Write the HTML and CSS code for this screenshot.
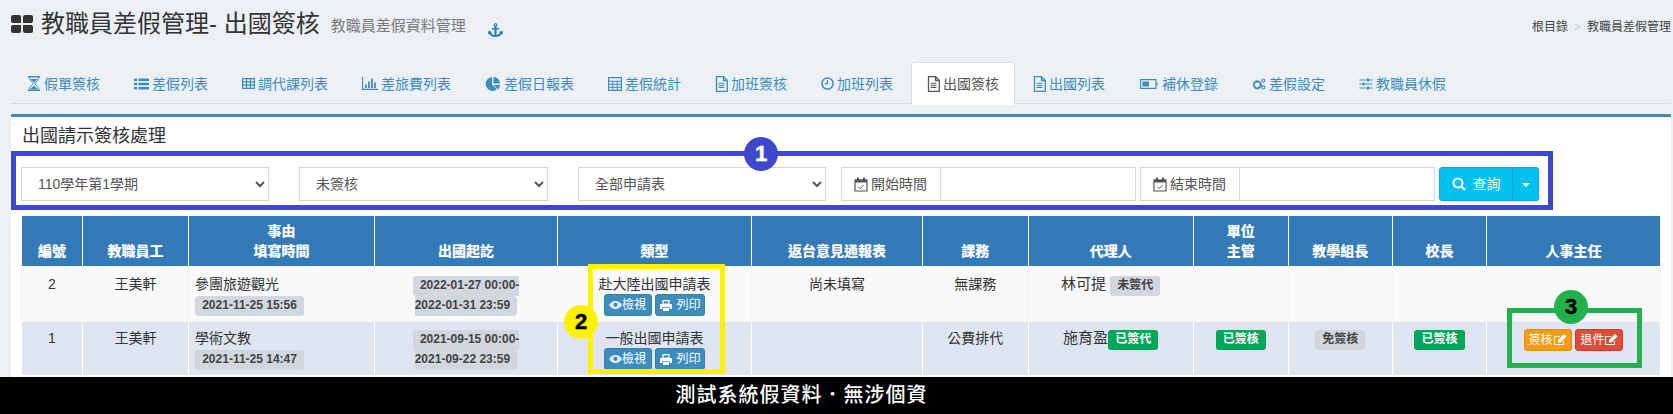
FILE: index.html
```html
<!DOCTYPE html>
<html lang="zh-Hant">
<head>
  <meta charset="UTF-8">
  <title>教職員差假管理- 出國簽核</title>
  <link rel="stylesheet" href="styles.css">
</head>
<body>
  <svg class="defs" width="0" height="0">
    <symbol id="i-file" viewBox="0 0 13 16">
      <path d="M1.500.7h7l3.800 3.800v10.800H1.500z M8.500.7v3.800h3.800" fill="none" stroke="currentColor" stroke-width="1.300"/>
      <path d="M3.600 7.200h5.800M3.600 9.300h5.800M3.600 11.400h5.800" fill="none" stroke="currentColor" stroke-width="1.100"/>
    </symbol>
    <symbol id="i-cal" viewBox="0 0 14 15">
      <path d="M1 3h12v11H1z" fill="none" stroke="currentColor" stroke-width="1.200"/>
      <path d="M1 2.500h12v3H1zM3 .5h2v3H3zM9 .5h2v3H9z" fill="currentColor"/>
      <path d="M4.200 9.600l2 2 3.600-3.600" fill="none" stroke="currentColor"/>
    </symbol>
    <symbol id="i-eye" viewBox="0 0 13 8">
      <path d="M6.500 0C3.500 0 1.200 2.200 0 4c1.200 1.800 3.500 4 6.500 4s5.300-2.200 6.500-4C11.800 2.200 9.500 0 6.500 0z" fill="#e4edf3"/>
      <circle cx="6.500" cy="3.800" r="2.100" fill="#3c8dbc"/>
    </symbol>
    <symbol id="i-print" viewBox="0 0 12 11">
      <path d="M3 .6h6v3.400H3z" fill="none" stroke="currentColor" stroke-width="1.200"/>
      <path d="M0 4h12v5H9.800V7H2.200v2H0zM3 7.800h6V11H3z" fill="currentColor"/>
    </symbol>
    <symbol id="i-edit" viewBox="0 0 14 12">
      <path d="M10.500 7v3.500h-9v-8H7" fill="none" stroke="currentColor" stroke-width="1.200" opacity=".85"/>
      <path d="M5 6l6-6 2.500 2.500-6 6H5z" fill="currentColor"/>
    </symbol>
  </svg>

  <header class="page-head">
    <div class="title-wrap">
      <svg class="title-icon" width="22" height="18" viewBox="0 0 22 18"><path d="M2 0h6a2 2 0 0 1 2 2v6H2a2 2 0 0 1-2-2V2a2 2 0 0 1 2-2zM14 0h6a2 2 0 0 1 2 2v4a2 2 0 0 1-2 2h-8V2a2 2 0 0 1 2-2zM2 10h8v6a2 2 0 0 1-2 2H2a2 2 0 0 1-2-2v-4a2 2 0 0 1 2-2zM12 10h8a2 2 0 0 1 2 2v4a2 2 0 0 1-2 2h-6a2 2 0 0 1-2-2z" fill="#333"/></svg>
      <h1>教職員差假管理- 出國簽核</h1>
      <small>教職員差假資料管理</small>
      <svg class="anchor" width="15" height="14" viewBox="0 0 15 14"><path d="M7.500 0a2 2 0 0 1 1 3.700V5H11v1.500H8.500v5.600c1.600-.2 2.900-1 3.500-2L10.800 9 14.500 7.800 15 11.500l-1.100-.8C12.800 12.700 10.300 14 7.500 14s-5.300-1.300-6.400-3.300l-1.100.8.500-3.700L4.200 9 3 10.100c.6 1 1.900 1.800 3.500 2V6.500H4V5h2.500V3.700a2 2 0 0 1 1-3.700zm0 1.200a.8.8 0 1 0 0 1.600.8.800 0 0 0 0-1.600z" fill="#1f7ac4"/></svg>
    </div>
    <div class="crumbs"><span>根目錄</span><i>&gt;</i><span>教職員差假管理</span></div>
  </header>

  <ul class="nav-tabs">
    <li><a href="#"><svg width="14" height="15" viewBox="0 0 14 15"><path d="M1 .7h12M1 14.300h12" stroke="currentColor" stroke-width="1.400"/><path d="M2.500 1.500C2.500 5 6 6 6 7.500S2.500 10 2.500 13.500M11.500 1.500C11.500 5 8 6 8 7.500s3.500 2.500 3.500 6" fill="none" stroke="currentColor"/><path d="M3.500 3h7L7 6.800zM3 13.500L7 9.500l4 4z" fill="currentColor"/></svg>假單簽核</a></li>
    <li><a href="#"><svg width="15" height="12" viewBox="0 0 15 12"><path d="M0 .5h3v2.500H0zM4.500.5H15V3H4.500zM0 4.800h3v2.500H0zM4.500 4.800H15v2.500H4.500zM0 9h3v2.500H0zM4.500 9H15v2.500H4.500z" fill="currentColor"/></svg>差假列表</a></li>
    <li><a href="#"><svg width="13" height="11" viewBox="0 0 13 11"><path d="M.6.6h11.800v9.800H.6zM.6 3.900h11.800M.6 7.200h11.800M4.500.6v9.800M8.500.6v9.800" fill="none" stroke="currentColor" stroke-width="1.200"/></svg>調代課列表</a></li>
    <li><a href="#"><svg width="16" height="13" viewBox="0 0 16 13"><path d="M.6 0v12.400H16" fill="none" stroke="currentColor" stroke-width="1.200"/><path d="M3 7.500h1.800V11H3zM6 4.500h1.800V11H6zM9 1.500h1.800V11H9zM12 5.500h1.800V11H12z" fill="currentColor"/></svg>差旅費列表</a></li>
    <li><a href="#"><svg width="16" height="14" viewBox="0 0 15 14"><path d="M6.500 0v7.500l5 5A7 7 0 1 1 6.500 0zM8 0a6.500 6.500 0 0 1 6.500 6.500H8zM8 8h6.500a6.500 6.500 0 0 1-1.900 4.600z" fill="currentColor"/></svg>差假日報表</a></li>
    <li><a href="#"><svg width="14" height="14" viewBox="0 0 14 14"><path d="M.6.6h12.800v12.800H.6z" fill="none" stroke="currentColor" stroke-width="1.200"/><path d="M.6 4.300h12.800M.6 7.300h12.800M.6 10.300h12.800M4.800 4.300v9M9.200 4.300v9" fill="none" stroke="currentColor"/></svg>差假統計</a></li>
    <li><a href="#"><svg width="13" height="16"><use href="#i-file"/></svg>加班簽核</a></li>
    <li><a href="#"><svg width="13" height="13" viewBox="0 0 13 13"><circle cx="6.500" cy="6.500" r="5.600" fill="none" stroke="currentColor" stroke-width="1.500"/><path d="M6.500 3v3.700H3.800" fill="none" stroke="currentColor" stroke-width="1.200"/></svg>加班列表</a></li>
    <li class="active"><a href="#"><svg width="13" height="16"><use href="#i-file"/></svg>出國簽核</a></li>
    <li><a href="#"><svg width="13" height="16"><use href="#i-file"/></svg>出國列表</a></li>
    <li><a href="#"><svg width="20" height="10" viewBox="0 0 18 10"><path d="M.6.600h15.300v8.800H.6z" fill="none" stroke="currentColor" stroke-width="1.100"/><path d="M2.500 2.500h6.500v5H2.500z" fill="currentColor"/><path d="M16.500 3.500h1.200v3h-1.200z" fill="currentColor"/></svg>補休登錄</a></li>
    <li><a href="#"><svg width="14" height="12" viewBox="0 0 16 14"><circle cx="6" cy="8" r="3.800" fill="none" stroke="currentColor" stroke-width="2.400" stroke-dasharray="2 .6"/><circle cx="6" cy="8" r="4.400" fill="none" stroke="currentColor" stroke-width="1.500"/><circle cx="13" cy="3" r="1.800" fill="none" stroke="currentColor" stroke-width="1.300"/><circle cx="13" cy="11" r="1.800" fill="none" stroke="currentColor" stroke-width="1.300"/></svg>差假設定</a></li>
    <li><a href="#"><svg width="14" height="12" viewBox="0 0 13 12"><path d="M0 2h13M0 6h13M0 10h13" stroke="currentColor" stroke-width="1.100"/><path d="M7.500.5h2v3h-2zM3 4.500h2v3H3zM7.500 8.500h2v3h-2z" fill="currentColor"/></svg>教職員休假</a></li>
  </ul>

  <section class="panel">
    <h2>出國請示簽核處理</h2>
    <div class="filter">
      <select class="sel"><option>110學年第1學期</option></select>
      <select class="sel wide"><option>未簽核</option></select>
      <select class="sel"><option>全部申請表</option></select>
      <div class="date-group first">
        <span class="addon"><svg width="14" height="15"><use href="#i-cal"/></svg>開始時間</span>
        <span class="date-input"></span>
      </div>
      <div class="date-group">
        <span class="addon"><svg width="14" height="15"><use href="#i-cal"/></svg>結束時間</span>
        <span class="date-input"></span>
      </div>
      <div class="search">
        <button class="search-main" type="button"><svg width="14" height="14" viewBox="0 0 14 14"><circle cx="6" cy="6" r="4.500" fill="none" stroke="currentColor" stroke-width="2"/><path d="M9.300 9.300l3.700 3.700" stroke="currentColor" stroke-width="2.400"/></svg>查詢</button>
        <button class="search-caret" type="button"><b></b></button>
      </div>
    </div>

    <table class="list">
      <colgroup>
        <col class="c1"><col class="c2"><col class="c3"><col class="c4"><col class="c5"><col class="c6">
        <col class="c7"><col class="c8"><col class="c9"><col class="c10"><col class="c11"><col class="c12">
      </colgroup>
      <thead>
        <tr>
          <th>編號</th><th>教職員工</th><th>事由<br>填寫時間</th><th>出國起訖</th><th>類型</th><th>返台意見通報表</th>
          <th>課務</th><th>代理人</th><th>單位<br>主管</th><th>教學組長</th><th>校長</th><th>人事主任</th>
        </tr>
      </thead>
      <tbody>
        <tr class="odd">
          <td>2</td>
          <td>王美軒</td>
          <td class="left">參團旅遊觀光<br><span class="label">2021-11-25 15:56</span></td>
          <td><span class="label">2022-01-27 00:00-<br>2022-01-31 23:59</span></td>
          <td>赴大陸出國申請表<br><a class="btn view" href="#"><svg width="13" height="8"><use href="#i-eye"/></svg>檢視</a> <a class="btn print" href="#"><svg width="12" height="11"><use href="#i-print"/></svg>列印</a></td>
          <td>尚未填寫</td>
          <td>無課務</td>
          <td><span class="agent">林可提</span> <span class="label">未簽代</span></td>
          <td></td><td></td><td></td><td></td>
        </tr>
        <tr class="even">
          <td>1</td>
          <td>王美軒</td>
          <td class="left">學術文教<br><span class="label">2021-11-25 14:47</span></td>
          <td><span class="label">2021-09-15 00:00-<br>2021-09-22 23:59</span></td>
          <td>一般出國申請表<br><a class="btn view" href="#"><svg width="13" height="8"><use href="#i-eye"/></svg>檢視</a> <a class="btn print" href="#"><svg width="12" height="11"><use href="#i-print"/></svg>列印</a></td>
          <td></td>
          <td>公費排代</td>
          <td><span class="agent">施育盈</span><span class="label ok">已簽代</span></td>
          <td><span class="label ok">已簽核</span></td>
          <td><span class="label">免簽核</span></td>
          <td><span class="label ok">已簽核</span></td>
          <td><a class="btn sign" href="#">簽核<svg width="14" height="12"><use href="#i-edit"/></svg></a> <a class="btn back" href="#">退件<svg width="14" height="12"><use href="#i-edit"/></svg></a></td>
        </tr>
      </tbody>
    </table>
  </section>

  <footer class="notice">測試系統假資料．無涉個資</footer>

  <!-- annotations drawn over the screenshot -->
  <div class="mark mark-blue">1</div>
  <div class="box box-yellow"></div>
  <div class="mark mark-yellow">2</div>
  <div class="box box-green"></div>
  <div class="mark mark-green">3</div>
</body>
</html>
```

FILE: styles.css
```css
/* Global */
html, body {
  height: 414px;
}

body {
  margin: 0;
  position: relative;
  overflow: hidden;
  display: flex;
  flex-direction: column;
  background-color: #ecf0f5;
  color: #333;
  font-family: "Liberation Sans", "Noto Sans CJK TC", sans-serif;
  font-size: 14px;
  line-height: 20px;
}

a {
  text-decoration: none;
}

svg {
  flex: none;
}

.defs {
  position: absolute;
}

/* Page header */
.page-head {
  height: 62px;
  flex: none;
  display: flex;
  justify-content: space-between;
  padding: 0 2px 0 11px;
}

.title-wrap {
  display: flex;
  align-items: flex-start;
  padding-top: 9px;
}

.title-icon {
  margin: 6px 8px 0 0;
}

h1 {
  margin: 0;
  font-size: 24px;
  font-weight: 400;
  line-height: 30px;
}

small {
  margin: 7px 0 0 11px;
  font-size: 15px;
  color: #777;
}

.anchor {
  margin: 14px 0 0 22px;
}

.crumbs {
  display: flex;
  padding-top: 17px;
  font-size: 12px;
  color: #444;
}

.crumbs i {
  margin: 0 6px;
  font-style: normal;
  color: #ccc;
}

/* Tabs */
.nav-tabs {
  flex: none;
  display: flex;
  height: 41px;
  margin: 0 2px 10px 11px;
  padding: 0;
  list-style: none;
  border-bottom: 1px solid #ddd;
}

.nav-tabs li {
  margin-right: 2px;
}

.nav-tabs a {
  display: flex;
  align-items: center;
  gap: 3px;
  height: 41px;
  padding: 0 15px;
  border: 1px solid transparent;
  border-radius: 4px 4px 0 0;
  color: #3c8dbc;
}

.nav-tabs .active a {
  background-color: #fff;
  border-color: #ddd #ddd #fff;
  color: #555;
}

/* Panel */
.panel {
  flex: 1;
  margin: 0 2px 0 11px;
  border-top: 3px solid #3c8dbc;
  background-color: #fff;
}

h2 {
  margin: 0;
  padding: 9px 11px 0;
  height: 34px;
  box-sizing: border-box;
  font-size: 18px;
  font-weight: 400;
  line-height: 20px;
}

/* Filter bar */
.filter {
  display: flex;
  box-sizing: border-box;
  width: 1542px;
  height: 59px;
  padding: 11px 0 0 5px;
  border: 5px solid #3f48cc;
}

.sel {
  width: 248px;
  height: 34px;
  margin-right: 30px;
  padding-left: 12px;
  border: 1px solid #d2d6de;
  border-radius: 0;
  background-color: #fff;
  color: #555;
  font: inherit;
}

.sel.wide {
  width: 249px;
}

.sel:nth-child(3) {
  margin-right: 15px;
}

.date-group {
  display: flex;
  width: 295px;
  height: 34px;
  margin-right: 4px;
}

.addon {
  display: flex;
  align-items: center;
  gap: 3px;
  box-sizing: border-box;
  width: 100px;
  padding-left: 12px;
  border: 1px solid #d2d6de;
  color: #555;
}

.date-input {
  flex: 1;
  border: 1px solid #d2d6de;
  border-left: 0;
}

.search {
  display: flex;
  height: 34px;
}

.search button {
  border: 1px solid #00acd6;
  background-color: #00c0ef;
  color: #fff;
  font: inherit;
  padding: 0;
}

.search-main {
  display: flex;
  align-items: center;
  justify-content: center;
  gap: 7px;
  width: 74px;
  border-radius: 3px 0 0 3px;
}

.search-caret {
  width: 26px;
  border-left: 0 !important;
  border-radius: 0 3px 3px 0;
}

.search-caret b {
  display: inline-block;
  border-top: 4px solid #fff;
  border-left: 4px solid transparent;
  border-right: 4px solid transparent;
  vertical-align: middle;
}

/* Table */
.list {
  width: 1639px;
  margin: 6px 0 0 10px;
  border-collapse: collapse;
  table-layout: fixed;
}

.c1 { width: 61px; }
.c2 { width: 106px; }
.c3 { width: 186px; }
.c4 { width: 183px; }
.c5 { width: 194px; }
.c6 { width: 171px; }
.c7 { width: 105.5px; }
.c8 { width: 165.5px; }
.c9 { width: 94.5px; }
.c10 { width: 104.5px; }
.c11 { width: 94px; }
.c12 { width: 174px; }

.list th {
  padding: 5px 0;
  border: 1px solid #fff;
  border-top: 0;
  background-color: #337ab7;
  color: #fff;
  font-weight: 700;
  text-align: center;
  text-shadow: 0 0 1px rgba(255, 255, 255, .6);
  vertical-align: bottom;
}

.list td {
  padding: 5px 6px;
  text-align: center;
  vertical-align: top;
  white-space: nowrap;
}

.list td.left {
  text-align: left;
}

.odd td {
  padding-top: 7px;
  padding-bottom: 5px;
  border: 1px solid #f4f4f4;
  background-color: #f9f9f9;
}

.even td {
  padding-top: 6px;
  border: 1px solid #fff;
  border-top-color: #f4f4f4;
  background-color: #dee4f0;
}

.agent {
  font-size: 15px;
}

.label {
  padding: .2em .6em .3em;
  border-radius: .25em;
  background-color: #d2d6de;
  color: #444;
  font-size: 12px;
  font-weight: 700;
  line-height: 1;
}

.label.ok {
  background-color: #00a65a;
  color: #fff;
}

/* Buttons */
.btn {
  display: inline-flex;
  align-items: center;
  justify-content: center;
  box-sizing: border-box;
  height: 22px;
  border: 1px solid transparent;
  border-radius: 3px;
  color: #fff;
  font-size: 12px;
  line-height: 18px;
  vertical-align: top;
}

.view, .print {
  background-color: #3c8dbc;
  border-color: #367fa9;
}

.view {
  width: 48px;
}

.print {
  width: 50px;
  gap: 4px;
}

.sign, .back {
  width: 48px;
  margin-top: 1px;
}

.sign {
  background-color: #f39c12;
  border-color: #e08e0b;
}

.back {
  background-color: #dd4b39;
  border-color: #d73925;
}

/* Footer notice */
.notice {
  flex: none;
  height: 37px;
  padding-right: 70px;
  background-color: #000;
  color: #fff;
  font-size: 20px;
  font-weight: 500;
  letter-spacing: 1px;
  line-height: 37px;
  text-align: center;
}

/* Annotations */
.mark {
  position: absolute;
  display: flex;
  align-items: center;
  justify-content: center;
  width: 34px;
  height: 34px;
  border-radius: 50%;
  font-size: 22px;
  font-weight: 700;
  -webkit-text-stroke: .5px currentColor;
}

.mark-blue {
  left: 744px;
  top: 137px;
  background-color: #3f48cc;
  color: #fff;
}

.mark-yellow {
  left: 564px;
  top: 305px;
  background-color: #fff200;
  color: #000;
}

.mark-green {
  left: 1554px;
  top: 290px;
  background-color: #22b14c;
  color: #000;
}

.box {
  position: absolute;
  box-sizing: border-box;
  border-style: solid;
  border-width: 5px;
}

.box-yellow {
  left: 588px;
  top: 264px;
  width: 137px;
  height: 110px;
  border-color: #fff200;
}

.box-green {
  left: 1507px;
  top: 308px;
  width: 135px;
  height: 60px;
  border-color: #22b14c;
}
```
